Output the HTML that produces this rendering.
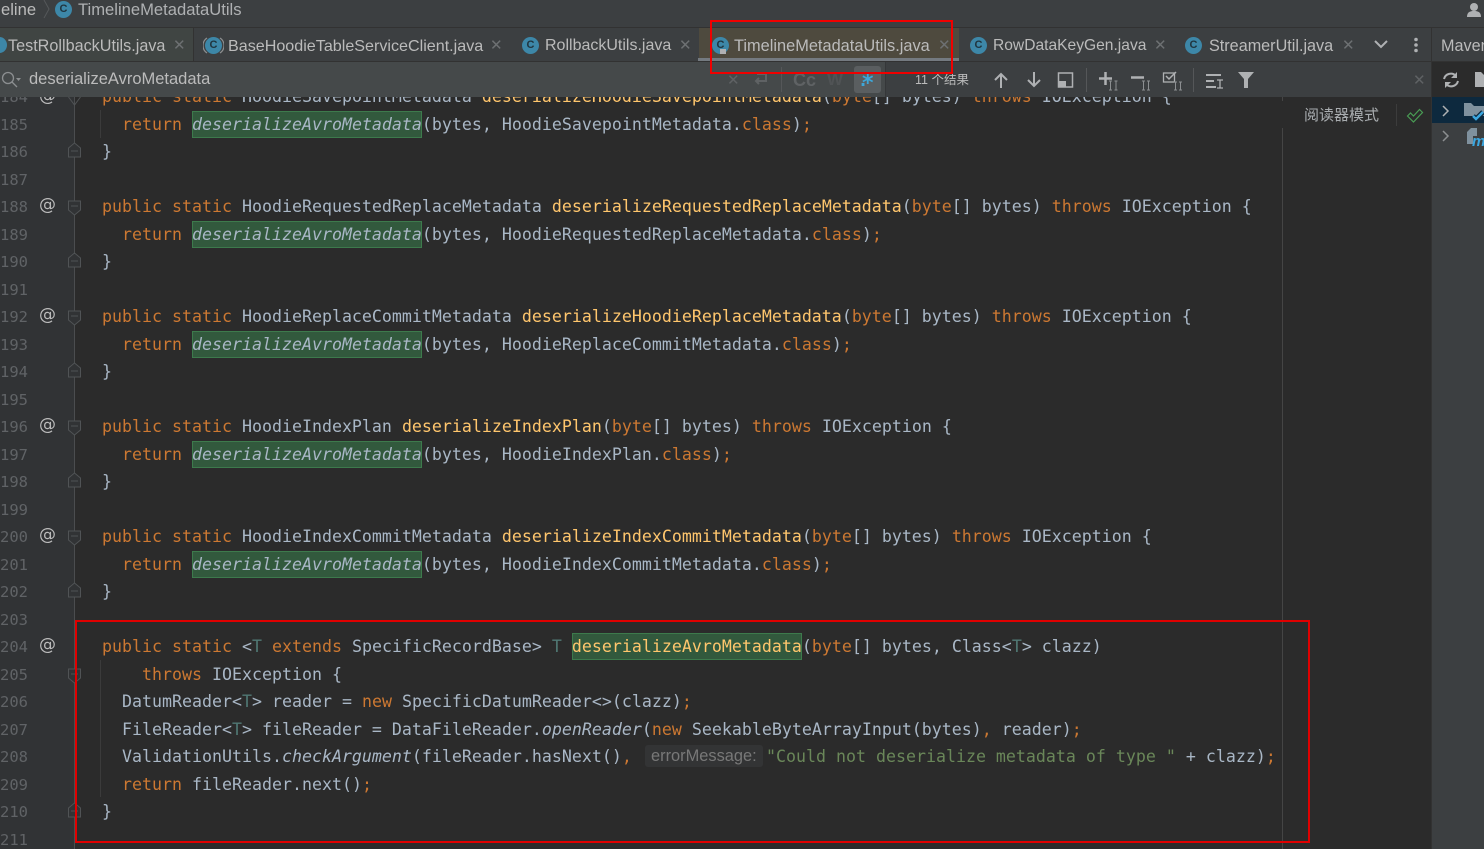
<!DOCTYPE html>
<html><head><meta charset="utf-8"><style>
html,body{margin:0;padding:0;background:#2b2b2b}
#r{position:relative;width:1484px;height:849px;overflow:hidden;background:#2b2b2b;font-family:"Liberation Sans","Noto Sans CJK SC",sans-serif}
.a{position:absolute}
.t{position:absolute;white-space:pre;line-height:20px;font-size:16px;color:#bbbbbb}
.l{position:absolute;left:102px;white-space:pre;font-family:"DejaVu Sans Mono","Liberation Mono",monospace;font-size:16.6px;line-height:20px;color:#a9b7c6;letter-spacing:.007px}
.n{position:absolute;left:0;width:26px;text-align:right;font-family:"DejaVu Sans Mono","Liberation Mono",monospace;font-size:15.5px;line-height:20px;color:#606366;white-space:pre}
.k{color:#cc7832}.f{color:#ffc66d}.g{color:#507874}.s{color:#6a8759}
.m{background:#32593d;outline:1px solid #3d7a4c;outline-offset:-1px;display:inline-block;height:27px;line-height:27px;vertical-align:top;margin-top:-4px;font-style:italic}
.mi{background:#32593d;outline:1px solid #3d7a4c;outline-offset:-1px;display:inline-block;height:27px;line-height:27px;vertical-align:top;margin-top:-4px;color:#ffc66d}
i{font-style:italic}
.c{position:absolute;width:17px;height:17px;border-radius:50%;background:#3d87a8;color:#20353f;font:bold 11px/17px "Liberation Sans",sans-serif;text-align:center}
.x{position:absolute;color:#6d7072;font:15px/20px "DejaVu Sans",sans-serif}
.at{position:absolute;left:39px;white-space:pre;line-height:20px;font-size:17px;color:#bbbbbb;font-family:"DejaVu Sans",sans-serif}
</style></head><body><div id="r">
<div class="a" style="left:0;top:0;width:1484px;height:27px;background:#3c3f41"></div>
<div class="a" style="left:0;top:27px;width:1484px;height:1px;background:#323232"></div>
<div class="a" style="left:0;top:28px;width:1484px;height:33px;background:#3c3f41"></div>
<div class="a" style="left:0;top:28px;width:193px;height:33px;background:#404543"></div>
<div class="a" style="left:193px;top:28px;width:1px;height:33px;background:#323232"></div>
<div class="a" style="left:699px;top:28px;width:260px;height:33px;background:#4e4a3e"></div>
<div class="a" style="left:698px;top:58px;width:261px;height:4px;background:#747a80"></div>
<div class="a" style="left:0;top:61px;width:1484px;height:1px;background:#323232"></div>
<div class="a" style="left:0;top:62px;width:385px;height:35px;background:#45494a"></div>
<div class="a" style="left:385px;top:62px;width:1047px;height:35px;background:#3c3f41"></div>
<div class="a" style="left:385px;top:62px;width:500px;height:35px;background:#45494a"></div>
<div class="a" style="left:885px;top:62px;width:1px;height:35px;background:#353739"></div>
<div class="a" style="left:1431px;top:28px;width:1px;height:821px;background:#323232"></div>
<div class="a" style="left:1432px;top:97px;width:52px;height:752px;background:#3c3f41"></div>
<div class="a" style="left:1432px;top:97px;width:52px;height:26px;background:#0d293e"></div>
<div class="a" style="left:0;top:97px;width:74px;height:752px;background:#313335"></div>
<div class="a" style="left:74px;top:97px;width:1px;height:752px;background:#4b4d4f"></div>
<div class="a" style="left:1282px;top:128px;width:1px;height:721px;background:#454545"></div>
<div class="a" style="left:1282px;top:97px;width:1px;height:4px;background:#454545"></div>

<div class="t" style="left:1px;top:0;font-size:16.6px">eline</div>
<svg class="a" style="left:42px;top:0" width="10" height="20"><path d="M2 0l5 9-5 9" fill="none" stroke="#55585a"/></svg>
<div class="c" style="left:55px;top:1px">C</div>
<div class="t" style="left:78px;top:0;font-size:16.6px;color:#afb1b3">TimelineMetadataUtils</div>
<svg class="a" style="left:1466px;top:2px" width="18" height="16"><circle cx="8" cy="5" r="4" fill="#afb1b3"/><path d="M1 15c0-5 3-6 7-6s7 1 7 6z" fill="#afb1b3"/></svg>

<div class="a" style="left:-8px;top:37px;width:15px;height:16px;border-radius:50%;background:#3d87a8"></div>
<div class="t" style="left:8px;top:36px;font-size:16.2px">TestRollbackUtils.java</div><div class="x" style="left:173px;top:35px">✕</div>
<svg class="a" style="left:203px;top:36px" width="21" height="19" fill="none"><path d="M4 2a9 9 0 0 0 0 15M17 2a9 9 0 0 1 0 15" stroke="#8c8f91" stroke-width="1.200"/></svg>
<div class="c" style="left:205px;top:37px">C</div>
<div class="t" style="left:228px;top:36px;font-size:16.13px">BaseHoodieTableServiceClient.java</div><div class="x" style="left:490px;top:35px">✕</div>
<div class="c" style="left:522px;top:37px">C</div>
<div class="t" style="left:545px;top:36px;font-size:16px">RollbackUtils.java</div><div class="x" style="left:679px;top:35px">✕</div>
<div class="c" style="left:712px;top:37px">C</div><div class="a" style="left:720px;top:49px;width:6px;height:5px;background:#afb1b3"></div>
<div class="t" style="left:734px;top:36px;font-size:16.37px">TimelineMetadataUtils.java</div><div class="x" style="left:938px;top:35px">✕</div>
<div class="c" style="left:970px;top:37px">C</div>
<div class="t" style="left:993px;top:36px;font-size:15.6px">RowDataKeyGen.java</div><div class="x" style="left:1154px;top:35px">✕</div>
<div class="c" style="left:1185px;top:37px">C</div>
<div class="t" style="left:1209px;top:36px;font-size:16.2px">StreamerUtil.java</div><div class="x" style="left:1342px;top:35px">✕</div>
<svg class="a" style="left:1373px;top:38px" width="16" height="14"><path d="M2 3l6 6 6-6" fill="none" stroke="#afb1b3" stroke-width="2"/></svg>
<svg class="a" style="left:1412px;top:37px" width="8" height="16"><circle cx="4" cy="2.5" r="1.8" fill="#afb1b3"/><circle cx="4" cy="8" r="1.8" fill="#afb1b3"/><circle cx="4" cy="13.500" r="1.800" fill="#afb1b3"/></svg>
<div class="t" style="left:1441px;top:36px;font-size:16.2px">Maven</div>

<svg class="a" style="left:1px;top:71px" width="20" height="18"><circle cx="7" cy="7" r="5.500" fill="none" stroke="#8c8f91" stroke-width="1.300"/><path d="M11 11l5 5" stroke="#8c8f91" stroke-width="1.300"/><path d="M15 7h5l-2.500 3z" fill="#8c8f91"/></svg>
<div class="t" style="left:29px;top:69px;font-size:16.5px;color:#bbbbbb">deserializeAvroMetadata</div>
<div class="x" style="left:727px;top:70px;color:#5f6264">✕</div>
<svg class="a" style="left:752px;top:71px" width="18" height="17"><path d="M5 3h9v7H4M7 7l-3 3 3 3" fill="none" stroke="#5f6264" stroke-width="2"/></svg>
<div class="a" style="left:781px;top:67px;width:1px;height:25px;background:#555759"></div>
<div class="t" style="left:793px;top:70px;font-size:18px;font-weight:bold;color:#5f6264">Cc</div>
<div class="t" style="left:827px;top:70px;font-size:17px;font-weight:bold;color:#505355">W</div>
<div class="a" style="left:854px;top:66px;width:27px;height:27px;border-radius:3px;background:#5a5e60"></div>
<div class="t" style="left:860px;top:71px;font-size:16px;font-weight:bold;color:#3ea6d8;font-family:'DejaVu Sans',sans-serif">.</div>
<div class="t" style="left:862px;top:74px;font-size:22px;font-weight:bold;color:#3ea6d8;font-family:'DejaVu Sans',sans-serif">*</div>
<div class="t" style="left:915px;top:70px;font-size:12.500px;color:#bbbbbb">11 个结果</div>
<svg class="a" style="left:992px;top:71px" width="18" height="18"><path d="M9 17V3M3 9l6-6 6 6" fill="none" stroke="#afb1b3" stroke-width="2"/></svg>
<svg class="a" style="left:1025px;top:71px" width="18" height="18"><path d="M9 1v14M3 9l6 6 6-6" fill="none" stroke="#afb1b3" stroke-width="2"/></svg>
<svg class="a" style="left:1057px;top:71px" width="18" height="18"><rect x="1.500" y="2" width="14" height="14" fill="none" stroke="#afb1b3" stroke-width="1.500"/><rect x="1.500" y="10" width="7.500" height="6" fill="#afb1b3"/></svg>
<div class="a" style="left:1086px;top:68px;width:1px;height:24px;background:#555759"></div>
<svg class="a" style="left:1098px;top:70px" width="22" height="21" fill="none"><path d="M7.500 2v13M1 8.500h13" stroke="#afb1b3" stroke-width="2.500"/><path d="M11 11h3M11 20h3M12.500 11v9M16.500 11h3M16.500 20h3M18 11v9" stroke="#8c8f91"/></svg>
<svg class="a" style="left:1130px;top:70px" width="22" height="21" fill="none"><path d="M1 7.500h13" stroke="#afb1b3" stroke-width="2.500"/><path d="M12 11h3M12 20h3M13.500 11v9M17 11h3M17 20h3M18.500 11v9" stroke="#8c8f91"/></svg>
<svg class="a" style="left:1162px;top:70px" width="22" height="21" fill="none"><rect x="1.500" y="3" width="11" height="9" stroke="#afb1b3" stroke-width="1.300"/><path d="M4 6l3 3 7-7" stroke="#afb1b3" stroke-width="1.500"/><path d="M12 12h3M12 20h3M13.500 12v8M17 12h3M17 20h3M18.500 12v8" stroke="#8c8f91"/></svg>
<div class="a" style="left:1193px;top:68px;width:1px;height:24px;background:#555759"></div>
<svg class="a" style="left:1205px;top:72px" width="20" height="18" fill="none"><path d="M1 3h15M1 9h8M1 15h10" stroke="#afb1b3" stroke-width="2"/><path d="M12 8h6M12 16h6M15 8v8" stroke="#afb1b3" stroke-width="1.300"/></svg>
<svg class="a" style="left:1238px;top:72px" width="16" height="16"><path d="M0 0h16L10 7v9H6V7z" fill="#afb1b3"/></svg>
<div class="x" style="left:1413px;top:70px;color:#5f6264">✕</div>
<svg class="a" style="left:1442px;top:71px" width="18" height="18" fill="none"><path d="M2 8a7 7 0 0 1 12-3M16 10a7 7 0 0 1-12 3" stroke="#afb1b3" stroke-width="2"/><path d="M15 1v6H9zM3 17v-6h6z" fill="#afb1b3"/></svg>
<svg class="a" style="left:1475px;top:72px" width="9" height="15"><path d="M0 0h6l3 3v12H0z" fill="#afb1b3"/></svg>

<svg class="a" style="left:1441px;top:104px" width="10" height="14"><path d="M2 2l5 5-5 5" fill="none" stroke="#afb1b3" stroke-width="1.500"/></svg>
<svg class="a" style="left:1441px;top:129px" width="10" height="14"><path d="M2 2l5 5-5 5" fill="none" stroke="#8c8f91" stroke-width="1.500"/></svg>
<svg class="a" style="left:1464px;top:102px" width="20" height="20"><path d="M0 1h7l3 3h10v10H0z" fill="#7f919e"/><path d="M9 14l3 3 7-7" fill="none" stroke="#0d293e" stroke-width="5"/><path d="M9 14l3 3 7-7" fill="none" stroke="#3ba7e0" stroke-width="2.500"/></svg>
<svg class="a" style="left:1466px;top:127px" width="18" height="21"><path d="M5 1h6v8H7v8H1V5z" fill="#7f919e"/><text x="6" y="19" font-family="Liberation Sans" font-style="italic" font-weight="bold" font-size="15" fill="#3ba7e0">m</text></svg>

<div class="a" style="left:0;top:97px;width:1282px;height:9px;overflow:hidden">
<div class="l k" style="top:-10px">public static <span style="color:#a9b7c6">HoodieSavepointMetadata</span> <span class="f">deserializeHoodieSavepointMetadata</span><span style="color:#a9b7c6">(</span>byte<span style="color:#a9b7c6">[] bytes)</span> throws <span style="color:#a9b7c6">IOException {</span></div>
<div class="n" style="top:-10px">184</div>
<div class="at" style="top:-11px">@</div>
</div>

<div class="n" style="top:115px">185</div><div class="l" style="top:115px">  <span class="k">return</span> <span class="m">deserializeAvroMetadata</span>(bytes, HoodieSavepointMetadata.<span class="k">class</span>)<span class="k">;</span></div>
<div class="n" style="top:142px">186</div><div class="l" style="top:142px">}</div>
<div class="n" style="top:170px">187</div>
<div class="n" style="top:197px">188</div><div class="l" style="top:197px"><span class="k">public static</span> HoodieRequestedReplaceMetadata <span class="f">deserializeRequestedReplaceMetadata</span>(<span class="k">byte</span>[] bytes) <span class="k">throws</span> IOException {</div>
<div class="n" style="top:225px">189</div><div class="l" style="top:225px">  <span class="k">return</span> <span class="m">deserializeAvroMetadata</span>(bytes, HoodieRequestedReplaceMetadata.<span class="k">class</span>)<span class="k">;</span></div>
<div class="n" style="top:252px">190</div><div class="l" style="top:252px">}</div>
<div class="n" style="top:280px">191</div>
<div class="n" style="top:307px">192</div><div class="l" style="top:307px"><span class="k">public static</span> HoodieReplaceCommitMetadata <span class="f">deserializeHoodieReplaceMetadata</span>(<span class="k">byte</span>[] bytes) <span class="k">throws</span> IOException {</div>
<div class="n" style="top:335px">193</div><div class="l" style="top:335px">  <span class="k">return</span> <span class="m">deserializeAvroMetadata</span>(bytes, HoodieReplaceCommitMetadata.<span class="k">class</span>)<span class="k">;</span></div>
<div class="n" style="top:362px">194</div><div class="l" style="top:362px">}</div>
<div class="n" style="top:390px">195</div>
<div class="n" style="top:417px">196</div><div class="l" style="top:417px"><span class="k">public static</span> HoodieIndexPlan <span class="f">deserializeIndexPlan</span>(<span class="k">byte</span>[] bytes) <span class="k">throws</span> IOException {</div>
<div class="n" style="top:445px">197</div><div class="l" style="top:445px">  <span class="k">return</span> <span class="m">deserializeAvroMetadata</span>(bytes, HoodieIndexPlan.<span class="k">class</span>)<span class="k">;</span></div>
<div class="n" style="top:472px">198</div><div class="l" style="top:472px">}</div>
<div class="n" style="top:500px">199</div>
<div class="n" style="top:527px">200</div><div class="l" style="top:527px"><span class="k">public static</span> HoodieIndexCommitMetadata <span class="f">deserializeIndexCommitMetadata</span>(<span class="k">byte</span>[] bytes) <span class="k">throws</span> IOException {</div>
<div class="n" style="top:555px">201</div><div class="l" style="top:555px">  <span class="k">return</span> <span class="m">deserializeAvroMetadata</span>(bytes, HoodieIndexCommitMetadata.<span class="k">class</span>)<span class="k">;</span></div>
<div class="n" style="top:582px">202</div><div class="l" style="top:582px">}</div>
<div class="n" style="top:610px">203</div>
<div class="n" style="top:637px">204</div><div class="l" style="top:637px"><span class="k">public static</span> &lt;<span class="g">T</span> <span class="k">extends</span> SpecificRecordBase&gt; <span class="g">T</span> <span class="mi">deserializeAvroMetadata</span>(<span class="k">byte</span>[] bytes, Class&lt;<span class="g">T</span>&gt; clazz)</div>
<div class="n" style="top:665px">205</div><div class="l" style="top:665px">    <span class="k">throws</span> IOException {</div>
<div class="n" style="top:692px">206</div><div class="l" style="top:692px">  DatumReader&lt;<span class="g">T</span>&gt; reader = <span class="k">new</span> SpecificDatumReader&lt;&gt;(clazz)<span class="k">;</span></div>
<div class="n" style="top:720px">207</div><div class="l" style="top:720px">  FileReader&lt;<span class="g">T</span>&gt; fileReader = DataFileReader.<i>openReader</i>(<span class="k">new</span> SeekableByteArrayInput(bytes)<span class="k">,</span> reader)<span class="k">;</span></div>
<div class="n" style="top:747px">208</div><div class="l" style="top:747px">  ValidationUtils.<i>checkArgument</i>(fileReader.hasNext()<span class="k">,</span></div>
<div class="a" style="left:645px;top:745px;width:118px;height:22px;border-radius:3px;background:#333435"></div>
<div class="t" style="left:651px;top:746px;font-size:16.4px;color:#787878">errorMessage:</div>
<div class="l s" style="left:766px;top:747px">"Could not deserialize metadata of type " <span style="color:#a9b7c6">+ clazz)</span><span class="k">;</span></div>
<div class="n" style="top:775px">209</div><div class="l" style="top:775px">  <span class="k">return</span> fileReader.next()<span class="k">;</span></div>
<div class="n" style="top:802px">210</div><div class="l" style="top:802px">}</div>
<div class="n" style="top:830px">211</div>

<div class="a" style="left:100px;top:110px;width:1px;height:28px;background:#3b3b3b"></div>
<div class="a" style="left:100px;top:660px;width:1px;height:137px;background:#3b3b3b"></div>

<svg class="a" style="left:0;top:0" width="90" height="849" fill="#313335" stroke="#505355" stroke-width="1">
<path d="M68.500 97l6 8 6-8" fill="none"/>
<path d="M68.500 148l6-5 6 5v9h-12zM71 151h7"/>
<path d="M68.500 258l6-5 6 5v9h-12zM71 261h7"/>
<path d="M68.500 368l6-5 6 5v9h-12zM71 371h7"/>
<path d="M68.500 478l6-5 6 5v9h-12zM71 481h7"/>
<path d="M68.500 588l6-5 6 5v9h-12zM71 591h7"/>
<path d="M68.500 808l6-5 6 5v9h-12zM71 811h7"/>
<path d="M68.500 201h12v9l-6 5-6-5zM71 206h7"/>
<path d="M68.500 311h12v9l-6 5-6-5zM71 316h7"/>
<path d="M68.500 421h12v9l-6 5-6-5zM71 426h7"/>
<path d="M68.500 531h12v9l-6 5-6-5zM71 536h7"/>
<path d="M68.500 669h12v9l-6 5-6-5zM71 674h7"/>
</svg>
<div class="at" style="top:195px">@</div>
<div class="at" style="top:305px">@</div>
<div class="at" style="top:415px">@</div>
<div class="at" style="top:525px">@</div>
<div class="at" style="top:635px">@</div>

<div class="t" style="left:1304px;top:106px;font-size:15px;color:#a9adb0">阅读器模式</div>
<div class="a" style="left:1396px;top:104px;width:1px;height:22px;background:#3c3c3c"></div>
<svg class="a" style="left:1406px;top:108px" width="18" height="15" fill="none"><path d="M1.500 8l3-3 3 3 6-6.500 3 3-9 9.500z" stroke="#499c54" stroke-width="1.200"/></svg>

<div class="a" style="left:710px;top:20px;width:239px;height:50px;border:2px solid #f00000"></div>
<div class="a" style="left:75px;top:620px;width:1231px;height:219px;border:2px solid #e00000"></div>
</div></body></html>
